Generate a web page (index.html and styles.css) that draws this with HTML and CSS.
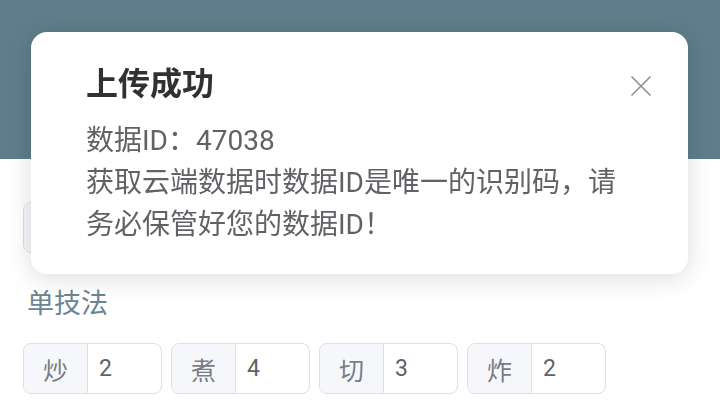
FILE: index.html
```html
<!DOCTYPE html>
<html lang="zh-CN">
<head>
<meta charset="utf-8">
<link rel="stylesheet" href="styles.css">
</head>
<body>
<div class="page">
  <header class="band"></header>
  <main class="content">
    <div class="row">
      <div class="group"><span class="prepend"></span><span class="value"></span></div>
      <div class="group"><span class="prepend"></span><span class="value"></span></div>
      <div class="group"><span class="prepend"></span><span class="value"></span></div>
      <div class="group"><span class="prepend"></span><span class="value"></span></div>
    </div>
    <h2 class="section-title">单技法</h2>
    <div class="row">
      <div class="group"><span class="prepend">炒</span><span class="value">2</span></div>
      <div class="group"><span class="prepend">煮</span><span class="value">4</span></div>
      <div class="group"><span class="prepend">切</span><span class="value">3</span></div>
      <div class="group"><span class="prepend">炸</span><span class="value">2</span></div>
    </div>
  </main>
</div>

<div class="notification">
  <h3 class="n-title">上传成功</h3>
  <p class="n-content">数据ID：47038<br>获取云端数据时数据ID是唯一的识别码，请务必保管好您的数据ID！</p>
  <button class="n-close" aria-label="关闭">
    <svg width="20" height="20" viewBox="0 0 20 20"><path d="M1 1 L19 19 M19 1 L1 19" stroke="#8f9298" stroke-width="1.7" fill="none" stroke-linecap="round"/></svg>
  </button>
</div>
</body>
</html>
```
FILE: styles.css
```css
* { box-sizing: border-box; }
html, body { margin: 0; padding: 0; }
body {
  background: #ffffff;
  font-family: Roboto, "Noto Sans CJK SC", sans-serif;
  width: 720px;
  height: 404px;
  overflow: hidden;
}
.band {
  height: 159px;
  background: #607d8b;
}
.content {
  padding: 43px 23px 0;
}
.row {
  display: flex;
  gap: 9px;
}
.group {
  display: flex;
  width: 139px;
  height: 51px;
  border: 1px solid #dcdfe6;
  border-radius: 8px;
  overflow: hidden;
  background: #fff;
}
.prepend {
  width: 64px;
  flex: none;
  background: #f5f7fa;
  border-right: 1px solid #dcdfe6;
  color: #7a7d84;
  font-size: 25px;
  display: flex;
  align-items: center;
  justify-content: center;
}
.value {
  flex: 1;
  display: flex;
  align-items: center;
  padding-left: 11px;
  color: #606266;
  font-size: 23px;
}
.section-title {
  margin: 0;
  height: 90px;
  padding: 6px 0 0 4px;
  display: flex;
  align-items: center;
  font-weight: normal;
  font-size: 27px;
  color: #6a8591;
}
.notification {
  position: fixed;
  top: 32px;
  left: 31px;
  width: 657px;
  background: #fff;
  border-radius: 16px;
  box-shadow: 0 4px 26px rgba(0, 0, 0, 0.14);
  padding: 28px 52px 28px 55px;
}
.n-title {
  margin: 0;
  font-size: 32px;
  line-height: 48px;
  font-weight: bold;
  color: #303133;
}
.n-content {
  margin: 12px 0 0;
  font-size: 28px;
  line-height: 42px;
  color: #606266;
}
.n-close {
  position: absolute;
  top: 44px;
  right: 37px;
  width: 20px;
  height: 20px;
  padding: 0;
  border: 0;
  background: none;
  display: block;
}
.n-close svg { display: block; }
```
